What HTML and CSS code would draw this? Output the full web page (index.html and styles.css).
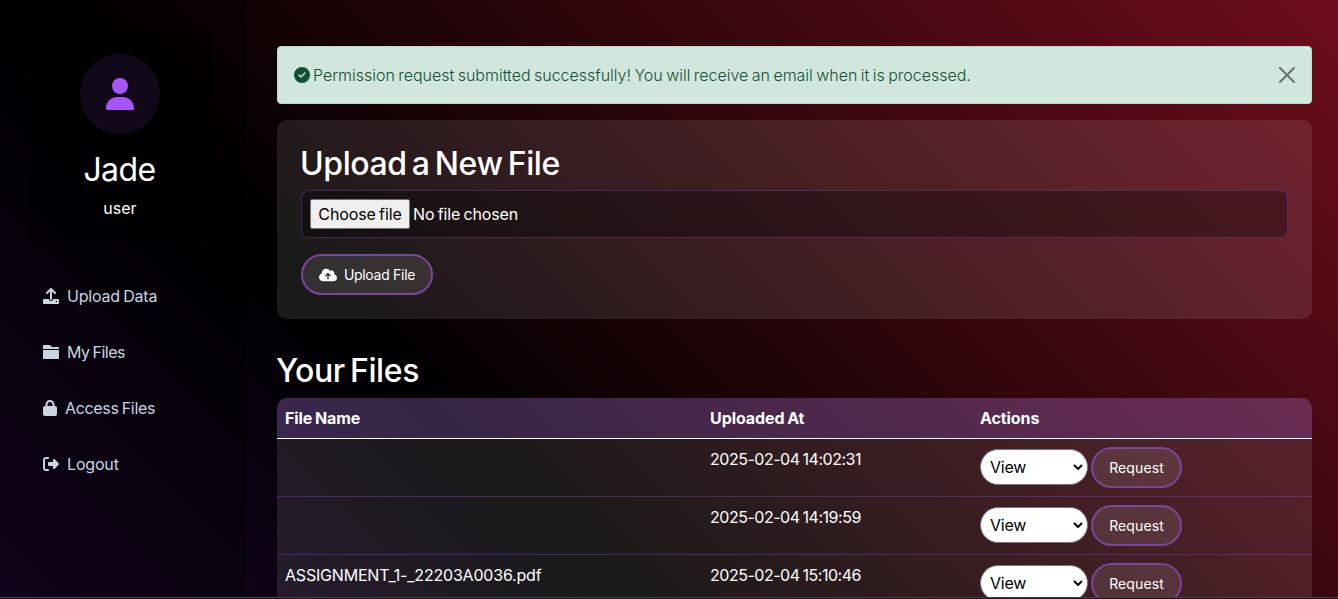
FILE: index.html
```html
<!DOCTYPE html>
<html lang="en">
<head>
<meta charset="utf-8">
<title>Your Files</title>
<link rel="stylesheet" href="styles.css">
</head>
<body>
<div class="app">
  <aside class="sidebar">
    <div class="profile">
      <div class="avatar"><svg width="28" height="32" viewBox="0 0 448 512"><path d="M224 256A128 128 0 1 0 224 0a128 128 0 1 0 0 256zm-45.700 48C79.800 304 0 383.800 0 482.300C0 498.700 13.300 512 29.700 512H418.300c16.400 0 29.700-13.300 29.700-29.700C448 383.800 368.200 304 269.700 304H178.300z"/></svg></div>
      <h2 class="name">Jade</h2>
      <p class="role">user</p>
    </div>
    <nav class="nav">
      <a class="nav-link"><svg width="16" height="16" viewBox="0 0 512 512"><path d="M288 109.300V352c0 17.700-14.300 32-32 32s-32-14.300-32-32V109.300l-73.400 73.400c-12.500 12.500-32.800 12.500-45.300 0s-12.500-32.800 0-45.300l128-128c12.500-12.500 32.800-12.500 45.300 0l128 128c12.500 12.500 12.500 32.800 0 45.300s-32.800 12.500-45.300 0L288 109.300zM32 352H192c0 35.300 28.700 64 64 64s64-28.700 64-64H480c18 0 32 14 32 32v96c0 18-14 32-32 32H32c-18 0-32-14-32-32V384c0-18 14-32 32-32zM432 456a24 24 0 1 0 0-48 24 24 0 1 0 0 48z"/></svg><span class="t-upload">Upload Data</span></a>
      <a class="nav-link"><svg width="16" height="16" viewBox="0 0 512 512"><path d="M0 64C0 46 14 32 32 32H205c17 0 25 7 37 19l19 19c12 12 20 26 37 26H480c18 0 32 14 32 32v32H0V64zM0 192H512V448c0 18-14 32-32 32H32c-18 0-32-14-32-32V192z"/></svg><span class="t-my">My Files</span></a>
      <a class="nav-link"><svg width="14" height="16" viewBox="0 0 448 512"><path d="M144 144v48H304V144c0-44.200-35.800-80-80-80s-80 35.800-80 80zM80 192V144C80 64.500 144.500 0 224 0s144 64.500 144 144v48h16c35.300 0 64 28.700 64 64V448c0 35.300-28.700 64-64 64H64c-35.300 0-64-28.700-64-64V256c0-35.300 28.700-64 64-64H80z"/></svg><span class="t-access">Access Files</span></a>
      <a class="nav-link"><svg width="16" height="16" viewBox="0 0 512 512"><path d="M377.900 105.900L500.700 228.700c7.200 7.200 11.300 17.100 11.300 27.300s-4.100 20.100-11.300 27.300L377.900 406.100c-6.400 6.400-15 9.900-24 9.900c-18.700 0-33.900-15.200-33.900-33.900l0-62.100-128 0c-17.700 0-32-14.300-32-32l0-64c0-17.700 14.300-32 32-32l128 0 0-62.100c0-18.700 15.200-33.900 33.900-33.900c9 0 17.600 3.600 24 9.900zM160 96L96 96c-17.700 0-32 14.300-32 32l0 256c0 17.700 14.300 32 32 32l64 0c17.700 0 32 14.300 32 32s-14.300 32-32 32l-64 0c-53 0-96-43-96-96L0 128C0 75 43 32 96 32l64 0c17.700 0 32 14.300 32 32s-14.300 32-32 32z"/></svg><span class="t-logout">Logout</span></a>
    </nav>
  </aside>
  <main class="main">
    <div class="alert">
      <svg width="16" height="16" viewBox="0 0 512 512"><path d="M256 512A256 256 0 1 0 256 0a256 256 0 1 0 0 512zM369 209L241 337c-9.400 9.400-24.600 9.400-33.900 0l-64-64c-9.400-9.400-9.400-24.600 0-33.900s24.600-9.400 33.900 0l47 47L335 175c9.400-9.400 24.600-9.400 33.900 0s9.400 24.600 0 33.900z"/></svg>
      <span class="alert-text">Permission request submitted successfully! You will receive an email when it is processed.</span>
      <svg class="close" width="16" height="16" viewBox="0 0 16 16"><path d="M.293.293a1 1 0 0 1 1.414 0L8 6.586 14.293.293a1 1 0 1 1 1.414 1.414L9.414 8l6.293 6.293a1 1 0 0 1-1.414 1.414L8 9.414l-6.293 6.293a1 1 0 0 1-1.414-1.414L6.586 8 .293 1.707a1 1 0 0 1 0-1.414z"/></svg>
    </div>
    <section class="upload">
      <h2 class="heading t-new">Upload a New File</h2>
      <div class="file-field"><span class="choose">Choose file</span><span class="no-file">No file chosen</span></div>
      <button class="btn btn-upload"><svg width="18" height="14" viewBox="0 32 640 448"><path d="M144 480C64.500 480 0 415.500 0 336c0-62.800 40.200-116.200 96.200-135.900c-.1-2.700-.2-5.400-.2-8.100c0-88.400 71.600-160 160-160c59.300 0 111 32.200 138.700 80.200C409.900 102 428.300 96 448 96c53 0 96 43 96 96c0 12.200-2.300 23.800-6.400 34.600C596 238.400 640 290.100 640 352c0 70.700-57.300 128-128 128H144zm79-217c-9.400 9.400-9.400 24.600 0 33.900s24.600 9.400 33.900 0l39-39V392c0 13.300 10.700 24 24 24s24-10.700 24-24V257.900l39 39c9.400 9.400 24.600 9.400 33.900 0s9.400-24.600 0-33.900l-80-80c-9.400-9.400-24.600-9.400-33.900 0l-80 80z"/></svg><span>Upload File</span></button>
    </section>
    <h2 class="heading t-your">Your Files</h2>
    <div class="table">
      <div class="row head"><span>File Name</span><span>Uploaded At</span><span>Actions</span></div>
      <div class="row"><span></span><span class="date">2025-02-04 14:02:31</span><div class="actions"><div class="select">View<svg width="10" height="6" viewBox="0 0 10 6"><path d="M1 1l4 4 4-4"/></svg></div><button class="btn">Request</button></div></div>
      <div class="row"><span></span><span class="date">2025-02-04 14:19:59</span><div class="actions"><div class="select">View<svg width="10" height="6" viewBox="0 0 10 6"><path d="M1 1l4 4 4-4"/></svg></div><button class="btn">Request</button></div></div>
      <div class="row"><span class="fname">ASSIGNMENT_1-_22203A0036.pdf</span><span class="date">2025-02-04 15:10:46</span><div class="actions"><div class="select">View<svg width="10" height="6" viewBox="0 0 10 6"><path d="M1 1l4 4 4-4"/></svg></div><button class="btn">Request</button></div></div>
    </div>
  </main>
  <div class="bottom-edge"></div>
</div>
</body>
</html>
```
FILE: styles.css
```css
* { box-sizing: border-box; }
body { margin: 0; overflow: hidden; font: 16px/24px Inter, sans-serif; word-spacing: -1px; color: #fff; background: #000; }
h2, p { margin: 0; font-weight: 400; }
.app { position: relative; display: flex; height: 599px; overflow: hidden; background: linear-gradient(45deg, #190528 0%, #000 32%, #6e0d1c 100%); }
.sidebar { flex: none; width: 246px; height: 599px; padding: 30px 33px 0 27px; background: rgba(0,0,0,.3); }
.profile { display: flex; flex-direction: column; align-items: center; height: 214px; padding-top: 24px; border-radius: 10px; background: rgba(0,0,0,.3); }
.avatar { display: flex; align-items: center; justify-content: center; width: 80px; height: 80px; border-radius: 50%; background: rgba(168,85,247,.1); }
.avatar svg { fill: #a855f7; }
.name { margin-top: 17px; margin-left: -1px; font-size: 32px; line-height: 38px; letter-spacing: -.6px; }
.role { margin-top: 7px; letter-spacing: 0; }
.nav { display: flex; flex-direction: column; gap: 32px; padding: 40px 0 0 16px; }
.nav-link { display: flex; align-items: center; gap: 8px; height: 24px; color: #cbd5e1; white-space: nowrap; }
.nav-link svg { fill: #cbd5e1; }
.t-upload { letter-spacing: -.2px; }
.t-my { letter-spacing: -.5px; }
.t-access { letter-spacing: -.33px; }
.t-logout { letter-spacing: -.17px; }
.main { flex: none; width: 1035px; margin: 46px 0 0 31px; }
.alert { display: flex; align-items: center; height: 58px; padding: 0 16px; border: 1px solid #badbcc; border-radius: 4px; background: #d1e7dd; color: #0f5132; }
.alert svg { fill: #0f5132; }
.alert-text { margin-left: 3px; white-space: nowrap; font-weight: 350; letter-spacing: -.02px; }
.alert .close { margin-left: auto; fill: #000; opacity: .5; }
.upload { height: 199px; margin-top: 16px; padding: 25px 24px 24px; border-radius: 10px; background: rgba(255,255,255,.1); }
.heading { margin-left: -1px; font-size: 32px; font-weight: 450; line-height: 38px; white-space: nowrap; letter-spacing: -.4px; word-spacing: -3px; }
.file-field { display: flex; align-items: center; height: 48px; margin-top: 7px; padding: 0 8px; border: 1px solid rgba(112,60,160,.5); border-radius: 8px; background: rgba(0,0,0,.32); }
.choose { display: flex; align-items: center; justify-content: center; width: 100px; height: 30px; border: 1px solid #767676; border-radius: 2px; background: #efefef; color: #000; letter-spacing: -.12px; }
.no-file { margin-left: 3px; letter-spacing: -.15px; }
.btn { display: flex; align-items: center; justify-content: center; width: 91px; height: 41px; padding: 0; border: 2px solid #7a459d; border-radius: 21px; background: rgba(255,255,255,.1); color: #fff; font: 14px/21px Inter, sans-serif; letter-spacing: .1px; }
.btn svg { margin-right: 7px; fill: #fff; }
.btn-upload { width: 132px; margin-top: 16px; letter-spacing: -.3px; }
.t-your { margin-top: 33px; }
.table { margin-top: 8px; border-radius: 10px 10px 0 0; overflow: hidden; }
.row { display: grid; grid-template-columns: 425px 270px 1fr; height: 58px; padding: 8px 8px 0; background: rgba(255,255,255,.1); border-bottom: 1px solid rgba(112,60,160,.5); white-space: nowrap; }
.head { height: 41px; background: linear-gradient(rgba(168,85,247,.2), rgba(168,85,247,.2)), rgba(255,255,255,.1); border-bottom-color: #fff; font-weight: 700; letter-spacing: -.08px; }
.date { letter-spacing: -.48px; word-spacing: -1px; }
.fname { letter-spacing: -.2px; }
.actions { display: flex; gap: 3px; }
.select { display: flex; align-items: center; justify-content: space-between; width: 108px; height: 36px; margin-top: 2px; padding: 0 4px 0 9px; border: 1px solid #767676; border-radius: 18px; background: #fff; color: #000; letter-spacing: -.25px; }
.select svg { fill: none; stroke: #000; stroke-width: 2; }
.bottom-edge { position: absolute; left: 0; right: 0; bottom: 0; height: 2px; border-top: 1px solid #444048; background: #151320; }
```
